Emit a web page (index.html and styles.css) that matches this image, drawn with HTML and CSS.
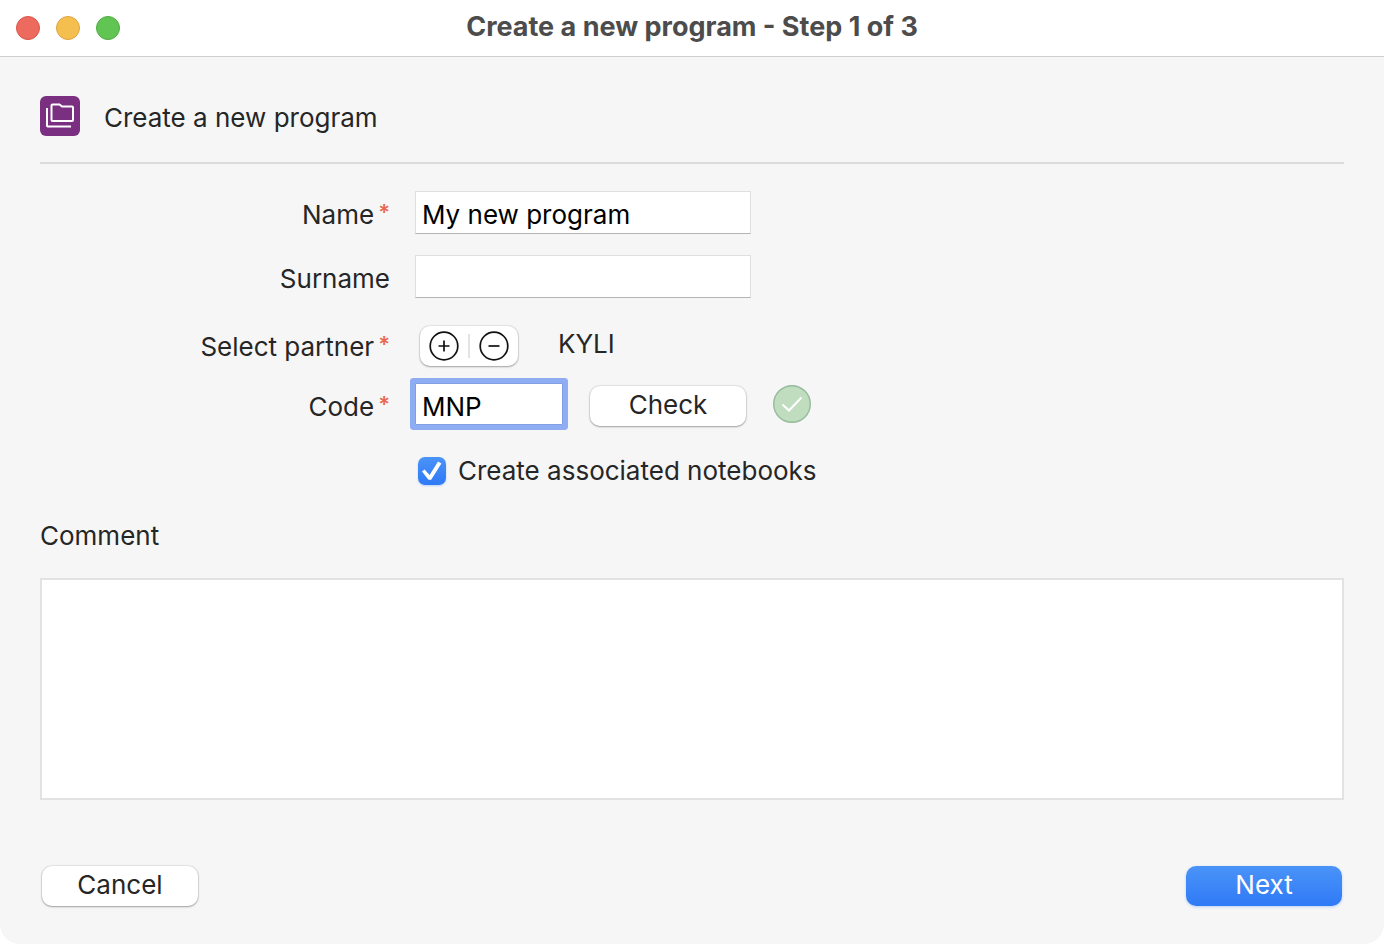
FILE: index.html
```
<!DOCTYPE html>
<html lang="en">
<head>
    <meta charset="UTF-8">
    <meta name="viewport" content="width=device-width, initial-scale=1.0">
    <title>Create a new program</title>
    <link rel="stylesheet" href="styles.css">
</head>
<body>

    <div class="window">
        <header class="titlebar">
            <div class="lights">
                <span class="light close"></span>
                <span class="light minimize"></span>
                <span class="light zoom"></span>
            </div>
            <h1>Create a new program - Step 1 of 3</h1>
        </header>

        <form class="content">
            <div class="heading">
                <svg class="heading-icon" viewBox="0 0 40 40" fill="none" stroke="#fff" stroke-width="2">
                    <rect width="40" height="40" rx="6" fill="#7b2f80" stroke="none"/>
                    <path d="M11.5 9.5a1 1 0 0 1 1-1h7l2.5 2H32a1 1 0 0 1 1 1V24a1 1 0 0 1-1 1H12.500a1 1 0 0 1-1-1z"/>
                    <path d="M7 12v17a1 1 0 0 0 1 1.500h23"/>
                </svg>
                <h2>Create a new program</h2>
            </div>

            <div class="fields">
                <div class="row">
                    <label for="name">Name<span class="required">*</span></label>
                    <div class="control"><input type="text" id="name" value="My new program"></div>
                </div>
                <div class="row">
                    <label for="surname">Surname</label>
                    <div class="control"><input type="text" id="surname"></div>
                </div>
                <div class="row partner">
                    <label for="addPartner">Select partner<span class="required">*</span></label>
                    <div class="control">
                        <div class="segmented">
                            <button type="button" id="addPartner" aria-label="Add partner">
                                <svg viewBox="0 0 30 30" fill="none" stroke="#111" stroke-width="1.7">
                                    <circle cx="15" cy="15" r="13.8"/>
                                    <path d="M9.5 15h11M15 9.5v11"/>
                                </svg>
                            </button>
                            <span class="divider"></span>
                            <button type="button" aria-label="Remove partner">
                                <svg viewBox="0 0 30 30" fill="none" stroke="#111" stroke-width="1.7">
                                    <circle cx="15" cy="15" r="13.8"/>
                                    <path d="M9.5 15h11"/>
                                </svg>
                            </button>
                        </div>
                        <span class="partner-name">KYLI</span>
                    </div>
                </div>
                <div class="row">
                    <label for="code">Code<span class="required">*</span></label>
                    <div class="control code">
                        <input type="text" id="code" class="active" value="MNP">
                        <button type="button" class="btn">Check</button>
                        <svg class="status" viewBox="0 0 38 38" fill="none">
                            <circle cx="19" cy="19" r="18.3" fill="#c0debf" stroke="#94bb9c" stroke-width="1.4"/>
                            <path d="M9.5 19.5l6.500 6L28.500 12.500" stroke="#fff" stroke-width="2"/>
                        </svg>
                    </div>
                </div>
                <div class="row">
                    <div class="control notebooks">
                        <input type="checkbox" id="notebooks" checked>
                        <label for="notebooks">Create associated notebooks</label>
                    </div>
                </div>
            </div>

            <label class="comment-label" for="comment">Comment</label>
            <textarea id="comment"></textarea>

            <div class="actions">
                <button type="button" class="btn">Cancel</button>
                <button type="submit" class="btn primary">Next</button>
            </div>
        </form>
    </div>

</body>
</html>
```

FILE: styles.css
```
* {
    box-sizing: border-box;
}
body {
    margin: 0;
    background: #fff;
    color: #262626;
    font-family: Inter, Roboto, sans-serif;
    font-size: 26px;
    line-height: 32px;
}
h1, h2 {
    margin: 0;
}
input, button, textarea {
    font: inherit;
    margin: 0;
}
.window {
    min-height: 100vh;
    display: flex;
    flex-direction: column;
    background: #f6f6f6;
    border-radius: 0 0 20px 20px;
    overflow: hidden;
}

/* title bar */
.titlebar {
    display: grid;
    grid-template-columns: 1fr auto 1fr;
    align-items: center;
    height: 57px;
    padding: 0 16px;
    background: #fff;
    border-bottom: 1px solid #cfcfcf;
}
.titlebar h1 {
    padding-bottom: 2px;
    font-size: 27px;
    line-height: 32px;
    font-weight: 700;
    color: #4c4c4c;
}
.lights {
    display: flex;
    gap: 16px;
}
.light {
    width: 24px;
    height: 24px;
    border-radius: 50%;
    border: 1px solid;
}
.close {
    background: #ed6a5e;
    border-color: #d95449;
}
.minimize {
    background: #f5bf4f;
    border-color: #dba640;
}
.zoom {
    background: #61c554;
    border-color: #4eab40;
}

/* form */
.content {
    flex: 1;
    display: flex;
    flex-direction: column;
    padding: 39px 40px 38px;
}
.heading {
    display: flex;
    align-items: center;
    gap: 24px;
    padding-bottom: 26px;
    border-bottom: 2px solid #dcdcdc;
}
.heading h2 {
    padding-top: 4px;
    font-size: 26px;
    font-weight: 400;
}
.heading-icon {
    width: 40px;
    height: 40px;
}
.fields {
    display: grid;
    gap: 16px;
    margin-top: 27px;
}
.row {
    display: grid;
    grid-template-columns: 350px 1fr;
    column-gap: 25px;
    align-items: center;
    min-height: 48px;
}
.row > label {
    text-align: right;
}
.required {
    margin-left: 4px;
    font-size: 22px;
    font-weight: 600;
    line-height: 20px;
    vertical-align: 4px;
    color: #e8694f;
}
.control {
    grid-column: 2;
    display: flex;
    align-self: start;
}
input[type="text"] {
    width: 336px;
    height: 43px;
    padding: 4px 6px 0;
    border: 1px solid #e0e0e0;
    border-bottom: 1px solid #b4b4b4;
    background: #fff;
    color: #000;
    outline: none;
}
input[type="text"].active {
    width: 148px;
    height: 42px;
    border-color: #819fe2;
    border-radius: 1px;
    box-shadow: 0 0 0 5px #8fadf2;
}
.partner {
    align-items: end;
}
.partner label {
    line-height: 40px;
}
.partner .control {
    align-self: end;
    align-items: center;
    gap: 40px;
    padding: 0 0 1px 5px;
}
.segmented {
    display: flex;
    align-items: center;
    justify-content: space-between;
    width: 98px;
    height: 40px;
    padding: 0 9px;
    border-radius: 10px;
    background: #fff;
    box-shadow: 0 0 1px 1px rgba(0, 0, 0, 0.07), 0 1px 2px rgba(0, 0, 0, 0.3);
}
.segmented button {
    width: 30px;
    height: 30px;
    padding: 0;
    border: none;
    background: none;
}
.segmented svg {
    display: block;
    width: 30px;
    height: 30px;
}
.divider {
    width: 2px;
    height: 24px;
    background: #e3e3e3;
}
.partner-name {
    padding-bottom: 4px;
}
.code {
    gap: 27px;
}
.btn {
    width: 156px;
    height: 40px;
    padding: 0 0 2px;
    border: none;
    border-radius: 10px;
    background: #fff;
    color: #262626;
    box-shadow: 0 0 1px 1px rgba(0, 0, 0, 0.07), 0 1px 2px rgba(0, 0, 0, 0.3);
}
.code .btn {
    margin-top: 3px;
}
.primary {
    background: linear-gradient(#4a93f8, #2f7af6);
    color: #fff;
    box-shadow: 0 1px 3px rgba(47, 122, 246, 0.3);
}
.status {
    width: 38px;
    height: 38px;
    margin-top: 2px;
}
.notebooks {
    align-self: center;
    align-items: center;
    gap: 12px;
    padding-left: 3px;
}
.notebooks input {
    appearance: none;
    display: grid;
    place-items: center;
    width: 28px;
    height: 28px;
    border-radius: 7px;
    background: linear-gradient(#4a93f8, #2f7af6);
    box-shadow: 0 1px 2px rgba(47, 122, 246, 0.3);
}
.notebooks input:checked::before {
    content: "";
    width: 20px;
    height: 20px;
    background: #fff;
    clip-path: polygon(0 53%, 13% 43%, 38% 70%, 80% 2%, 97% 12%, 46% 94%, 32% 94%);
}
.comment-label {
    align-self: flex-start;
    margin-top: 25px;
}
textarea {
    flex: 1;
    width: 100%;
    min-height: 120px;
    margin-top: 26px;
    padding: 6px;
    border: 2px solid #e2e2e2;
    background: #fff;
    resize: none;
    outline: none;
}
.actions {
    display: flex;
    justify-content: space-between;
    margin-top: 66px;
    padding: 0 2px;
}
```
